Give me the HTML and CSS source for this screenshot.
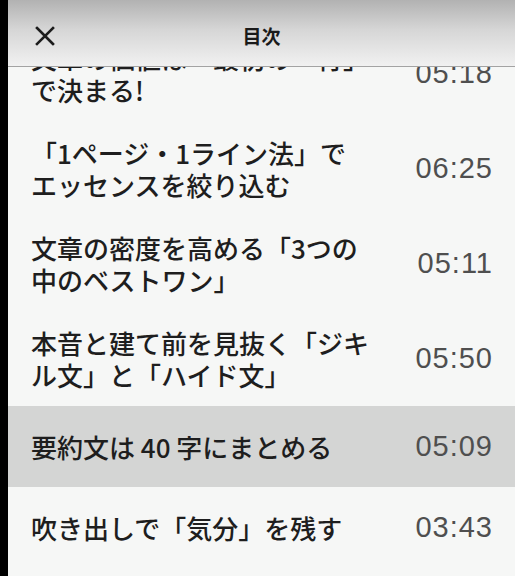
FILE: index.html
```html
<!DOCTYPE html>
<html lang="ja">
<head>
    <meta charset="UTF-8">
    <meta name="viewport" content="width=device-width, initial-scale=1.0">
    <title>目次</title>
    <link rel="stylesheet" href="styles.css">
</head>
<body>

    <div class="screen">
        <div class="header">
            <div class="status"></div>
            <div class="bar">
                <button class="close" aria-label="閉じる">
                    <svg width="20" height="20" viewBox="0 0 20 20">
                        <path d="M2 2 L18 18 M18 2 L2 18" stroke="#1c1c1c" stroke-width="2.6" stroke-linecap="square" fill="none"/>
                    </svg>
                </button>
                <h1>目次</h1>
                <span></span>
            </div>
        </div>

        <ul class="toc">
            <li class="item">
                <span class="title">文章の価値は「最初の一行」<br>で決まる!</span>
                <span class="time">05:18</span>
            </li>
            <li class="item">
                <span class="title">「1ページ・1ライン法」で<br>エッセンスを絞り込む</span>
                <span class="time">06:25</span>
            </li>
            <li class="item">
                <span class="title">文章の密度を高める「3つの<br>中のベストワン」</span>
                <span class="time">05:11</span>
            </li>
            <li class="item">
                <span class="title">本音と建て前を見抜く「ジキ<br>ル文」と「ハイド文」</span>
                <span class="time">05:50</span>
            </li>
            <li class="item current">
                <span class="title">要約文は 40 字にまとめる</span>
                <span class="time">05:09</span>
            </li>
            <li class="item">
                <span class="title">吹き出しで「気分」を残す</span>
                <span class="time">03:43</span>
            </li>
        </ul>
    </div>

</body>
</html>
```

FILE: styles.css
```css
body {
    margin: 0;
    background-color: #000;
    font-family: "Noto Sans CJK JP", "Liberation Sans", sans-serif;
    color: #1e1e1e;
}
.screen {
    margin-left: 8px;
    min-height: 576px;
    background-color: #f6f7f6;
    overflow: hidden;
}
.header {
    position: fixed;
    top: 0;
    left: 8px;
    right: 0;
    height: 66px;
    background: linear-gradient(#b2b2b2, #d6d6d6 45%, #f1f1f1);
    border-bottom: 1px solid #a3a3a3;
    z-index: 2;
}
.status {
    height: 5px;
}
.bar {
    height: 61px;
    display: grid;
    grid-template-columns: 70px 1fr 70px;
    align-items: center;
}
.close {
    background: none;
    border: none;
    padding: 0 0 0 27px;
    height: 20px;
    display: flex;
    align-items: center;
    cursor: pointer;
}
h1 {
    margin: 0;
    text-align: center;
    font-size: 19px;
    font-weight: 700;
    color: #1a1a1a;
}
.toc {
    list-style: none;
    margin: 26px 0 0;
    padding: 0;
}
.item {
    display: flex;
    align-items: center;
    justify-content: space-between;
    min-height: 81px;
    box-sizing: border-box;
    padding: 15.5px 22px 15.5px 23px;
}
.item.current {
    background-color: #d4d5d4;
}
.title {
    font-size: 26px;
    line-height: 32px;
    font-weight: 500;
    color: #1e1e1e;
}
.time {
    font-family: "Liberation Sans", sans-serif;
    font-size: 29px;
    letter-spacing: 1px;
    color: #4f4f4f;
}
```
